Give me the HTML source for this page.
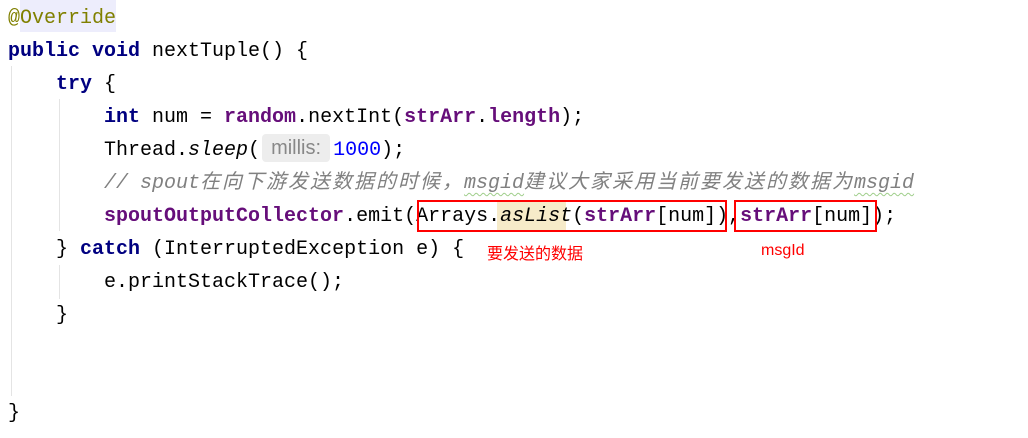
<!DOCTYPE html>
<html><head><meta charset="utf-8"><style>
html,body{margin:0;padding:0;background:#fff;width:1028px;height:438px;overflow:hidden;position:relative}
.l{position:absolute;left:8px;height:33px;line-height:33px;font-family:"Liberation Mono","Noto Sans CJK SC",monospace;font-size:20px;color:#000;white-space:pre}
.k{color:#000080;font-weight:bold}
.f{color:#660e7a;font-weight:bold}
.a{color:#808000}
.n{color:#0000ff}
.c{color:#808080;font-style:italic}
.i{font-style:italic}
.cj{letter-spacing:2px}
.g{position:absolute;width:1px;background:#e4e4e4}
.box{position:absolute;border:2px solid #f00;box-sizing:border-box}
.r{position:absolute;color:#f00;font-family:"Liberation Sans","Noto Sans CJK SC",sans-serif;font-size:16px}
.hint{display:inline-block;box-sizing:border-box;width:68px;text-align:center;background:#ededed;color:#888;font-family:"Liberation Sans",sans-serif;font-style:normal;font-size:20px;border-radius:4px;line-height:28px;margin:0 3px 0 2px;vertical-align:1px}
.wv{text-decoration:underline wavy #9fce8a;text-decoration-thickness:1px;text-underline-offset:4px}
</style></head><body>
<div style="position:absolute;left:20px;top:0;width:96px;height:32px;background:#ededfc"></div>
<div style="position:absolute;left:497px;top:200px;width:69px;height:32px;background:#f6ebc9"></div>
<div class="g" style="left:11px;top:66px;height:330px"></div>
<div class="g" style="left:59px;top:99px;height:132px"></div>
<div class="g" style="left:59px;top:265px;height:34px"></div>
<div class="l a" style="top:2px">@Override</div>
<div class="l" style="top:35px"><span class="k">public void</span> nextTuple() {</div>
<div class="l" style="top:68px">    <span class="k">try</span> {</div>
<div class="l" style="top:101px">        <span class="k">int</span> num = <span class="f">random</span>.nextInt(<span class="f">strArr</span>.<span class="f">length</span>);</div>
<div class="l" style="top:134px">        Thread.<span class="i">sleep</span>(<span class="hint">millis:</span><span class="n">1000</span>);</div>
<div class="l c" style="top:167px">        // spout<span class="cj">在向下游发送数据的时候，</span><span class="wv">msgid</span><span class="cj">建议大家采用当前要发送的数据为</span><span class="wv">msgid</span></div>
<div class="l" style="top:200px">        <span class="f">spoutOutputCollector</span>.emit(Arrays.<span class="i">asList</span>(<span class="f">strArr</span>[num]),<span class="f">strArr</span>[num]);</div>
<div class="l" style="top:233px">    } <span class="k">catch</span> (InterruptedException e) {</div>
<div class="l" style="top:266px">        e.printStackTrace();</div>
<div class="l" style="top:299px">    }</div>
<div class="l" style="top:397px">}</div>
<div class="box" style="left:417px;top:200px;width:310px;height:32px"></div>
<div class="box" style="left:734px;top:200px;width:143px;height:32px"></div>
<div class="r" style="left:487px;top:240px">要发送的数据</div>
<div class="r" style="left:761px;top:242px">msgId</div>
</body></html>
